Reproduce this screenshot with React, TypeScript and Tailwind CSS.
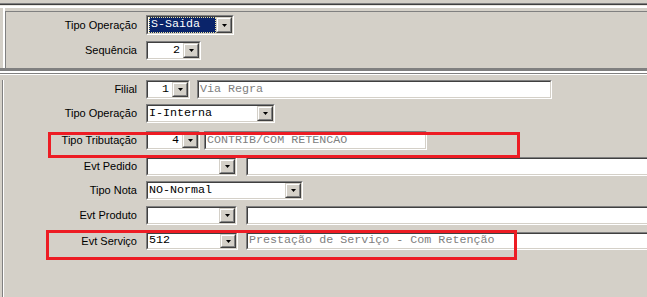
import React from "react";

// Windows-classic style form (Delphi/VB screen), two grouped panels

const mono = "font-['Liberation_Mono','Courier_New',monospace] text-[11.7px] leading-none";

const Arrow: React.FC = () => (
  <svg width="7" height="4" viewBox="0 0 7 4" className="block mt-[1px]">
    <path d="M1 0h5L3.5 3z" fill="#000" />
  </svg>
);

const DropButton: React.FC = () => (
  <div className="h-full w-[16px] shrink-0 border-t border-l border-b border-r border-t-[#d4d0c8] border-l-[#d4d0c8] border-b-[#404040] border-r-[#404040]">
    <div className="h-full w-full flex items-center justify-center bg-[#d4d0c8] border-t border-l border-b border-r border-t-white border-l-white border-b-[#808080] border-r-[#808080]">
      <Arrow />
    </div>
  </div>
);

// sunken 3D frame used by both combos and edits
const Sunken: React.FC<{ w: number; h: number; children?: React.ReactNode }> = ({ w, h, children }) => (
  <div
    className="shrink-0 border-t border-l border-b border-r border-t-[#808080] border-l-[#808080] border-b-white border-r-white"
    style={{ width: w, height: h }}
  >
    <div className="h-full w-full flex bg-white border-t border-l border-b border-r border-t-[#404040] border-l-[#404040] border-b-[#d4d0c8] border-r-[#d4d0c8]">
      {children}
    </div>
  </div>
);

type ComboProps = {
  w: number;
  h?: number;
  value?: string;
  right?: boolean;
  selected?: boolean;
};

const Combo: React.FC<ComboProps> = ({ w, h = 19, value = "", right, selected }) => (
  <Sunken w={w} h={h}>
    <div className={`flex-1 min-w-0 flex items-center ${right ? "justify-end pr-[3px]" : "pl-[1px]"}`}>
      {selected ? (
        <div className="h-full w-full flex items-center bg-[#0a246a] border border-dotted border-[#e8e0a0]">
          <span className={`${mono} text-white pl-[1px]`}>{value}</span>
        </div>
      ) : (
        <span className={`${mono} text-black whitespace-pre`}>{value}</span>
      )}
    </div>
    <DropButton />
  </Sunken>
);

const Edit: React.FC<{ w: number; h?: number; value?: string }> = ({ w, h = 19, value = "" }) => (
  <Sunken w={w} h={h}>
    <div className="flex-1 flex items-center pl-[1px] overflow-hidden">
      <span className={`${mono} text-[#808080] whitespace-pre`}>{value}</span>
    </div>
  </Sunken>
);

const Row: React.FC<{ label: string; labelW: number; mt: number; h?: number; children: React.ReactNode }> = ({
  label,
  labelW,
  mt,
  h = 19,
  children,
}) => (
  <div className="flex items-center" style={{ marginTop: mt, height: h }}>
    <div className="shrink-0 text-right whitespace-nowrap" style={{ width: labelW }}>
      {label}
    </div>
    <div className="ml-[9px] flex items-center">{children}</div>
  </div>
);

export default function App() {
  return (
    <div className="w-[647px] h-[297px] overflow-hidden bg-[#d4d0c8] font-['Liberation_Sans',Arial,sans-serif] text-[11px] text-black">
      {/* window top edge */}
      <div className="h-[3px]" />
      <div className="h-px bg-[#808080]" />
      <div className="h-px bg-[#404040]" />
      <div className="h-px bg-[#e8e6e1]" />
      <div className="h-[2px] bg-white" />

      {/* header group */}
      <div className="ml-[3px] border-l-2 border-white pt-[3px]">
        <div className="h-[57px] border-t border-l border-[#808080] pt-[3px]">
          <Row label="Tipo Operação" labelW={131} mt={0} h={20}>
            <Combo w={88} h={20} value="S-Saida" selected />
          </Row>
          <Row label="Sequência" labelW={131} mt={6}>
            <Combo w={55} value="2" right />
          </Row>
        </div>
      </div>

      {/* separators */}
      <div className="h-[3px] bg-[#808080]" />
      <div className="h-[2px] bg-white" />
      <div className="h-px bg-[#808080]" />
      <div className="h-px bg-white" />

      {/* detail group */}
      <div className="relative">
        <div className="ml-[2px] h-[222px] border-l border-[#808080]">
          <div className="h-full border-l border-white">
            <Row label="Filial" labelW={133} mt={5}>
              <Combo w={44} value="1" right />
              <div className="ml-[7px]">
                <Edit w={355} value="Via Regra" />
              </div>
            </Row>
            <Row label="Tipo Operação" labelW={133} mt={5}>
              <Combo w={129} value="I-Interna" />
            </Row>
            <Row label="Tipo Tributação" labelW={133} mt={8}>
              <Combo w={54} value="4" right />
              <div className="ml-[4px]">
                <Edit w={223} value="CONTRIB/COM RETENCAO" />
              </div>
            </Row>
            <Row label="Evt Pedido" labelW={133} mt={7}>
              <Combo w={91} />
              <div className="ml-[9px]">
                <Edit w={420} />
              </div>
            </Row>
            <Row label="Tipo Nota" labelW={133} mt={5}>
              <Combo w={157} value="NO-Normal" />
            </Row>
            <Row label="Evt Produto" labelW={133} mt={6}>
              <Combo w={91} />
              <div className="ml-[9px]">
                <Edit w={420} />
              </div>
            </Row>
            <Row label="Evt Serviço" labelW={133} mt={7} h={18}>
              <Combo w={92} h={18} value="512" />
              <div className="ml-[8px]">
                <Edit w={420} h={18} value="Prestação de Serviço - Com Retenção" />
              </div>
            </Row>
          </div>
        </div>

        {/* red highlight annotations */}
        <div className="pointer-events-none absolute left-[48px] top-[52px] w-[472px] h-[26px] border-[3px] border-[#ed1c24]" />
        <div className="pointer-events-none absolute left-[46px] top-[150px] w-[471px] h-[30px] border-[3px] border-[#ed1c24]" />
      </div>
    </div>
  );
}
